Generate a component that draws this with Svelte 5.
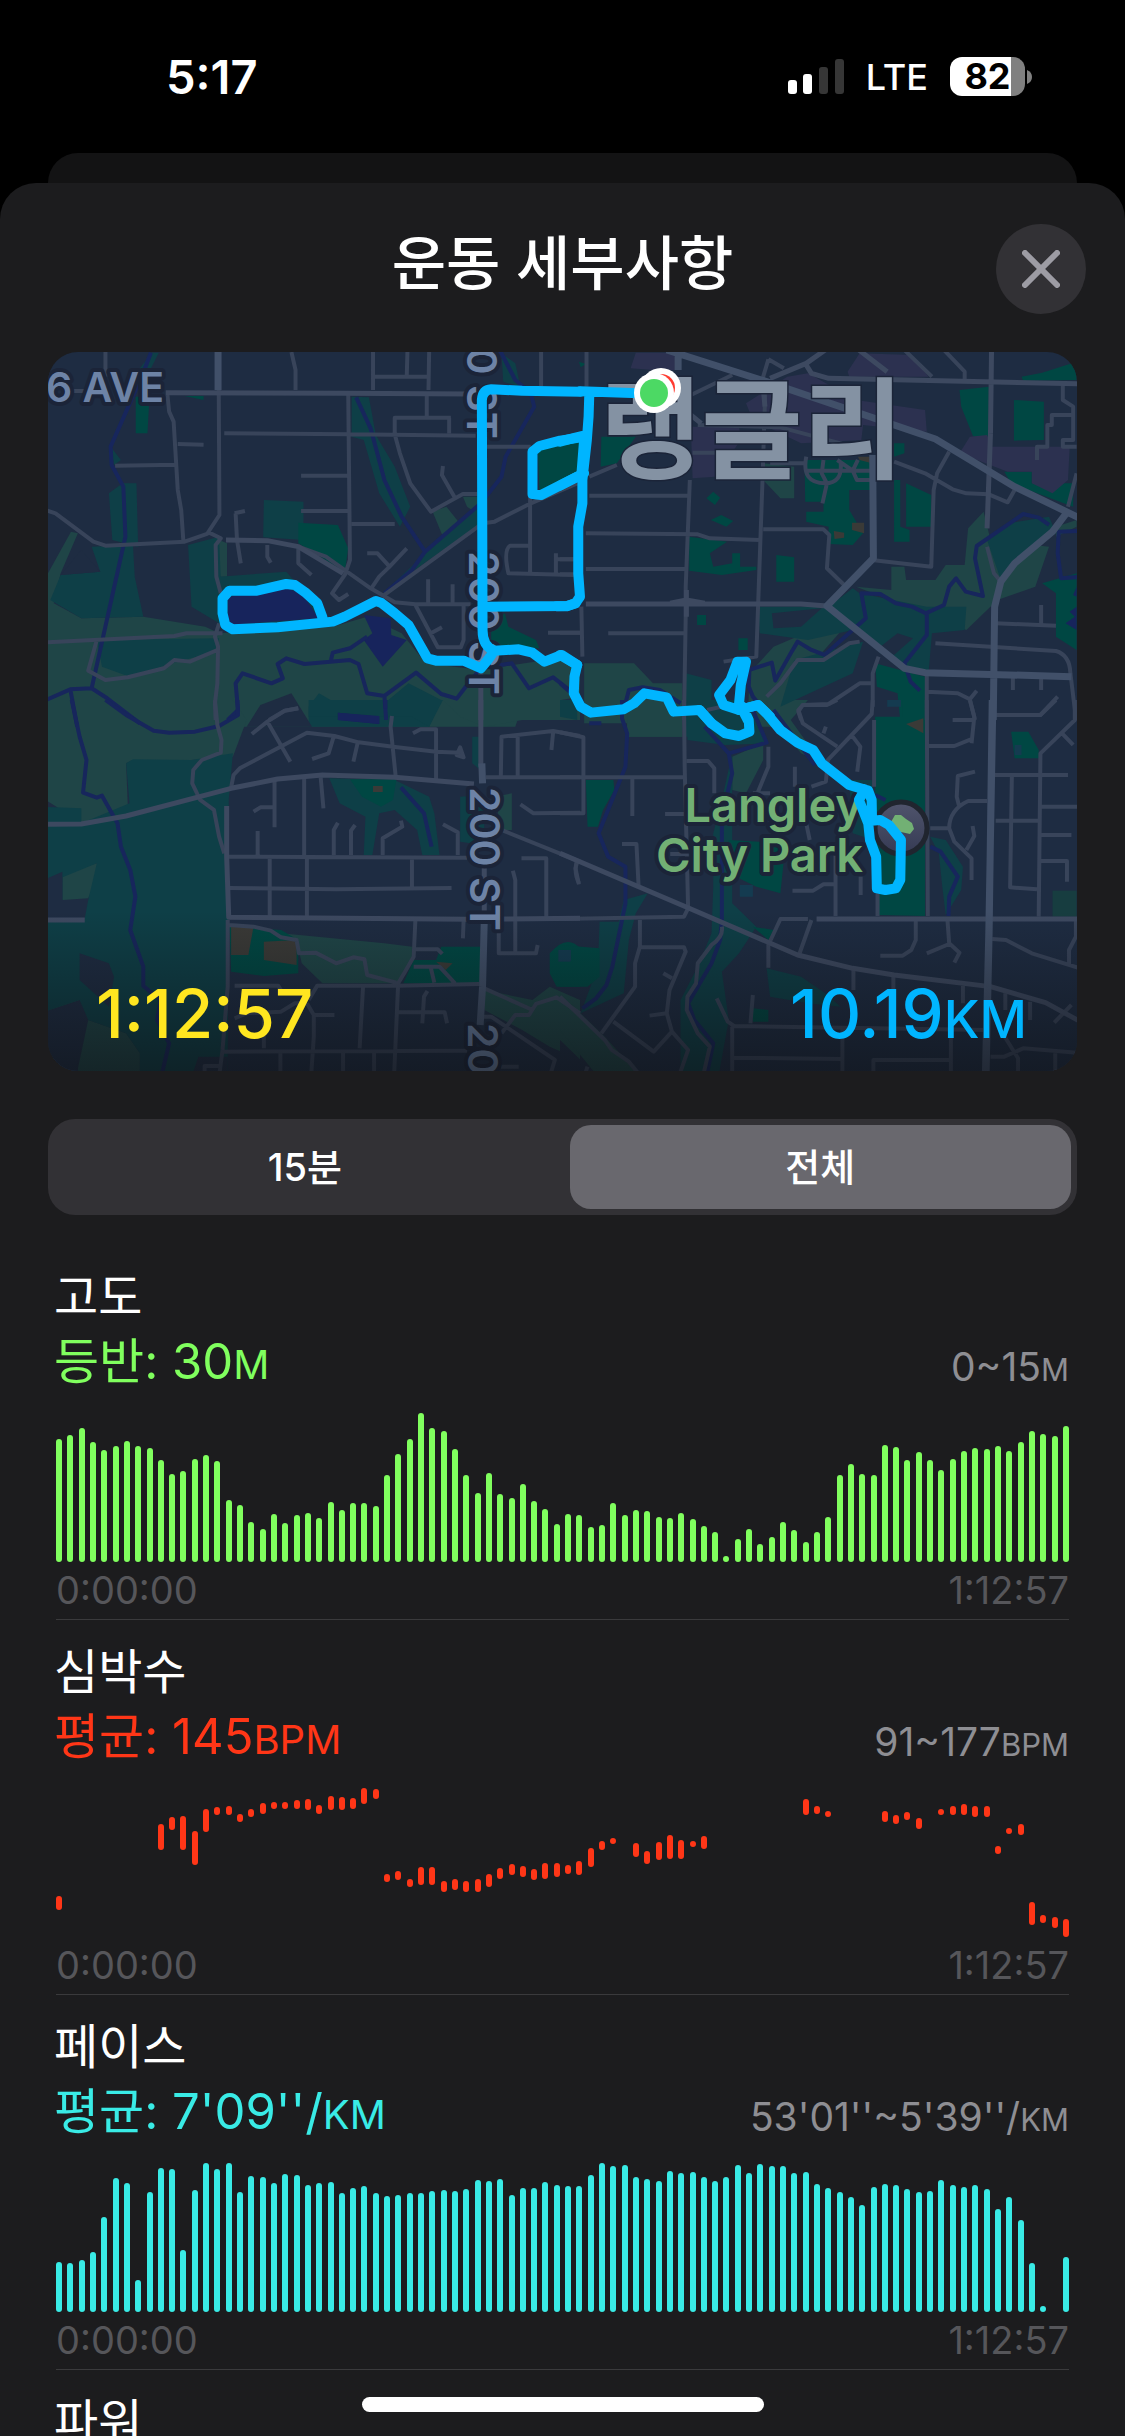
<script>
  let range = "all";

  // heights of the bars, bottom-aligned
  const altitude = [
    123, 127, 134, 120, 112, 116, 121, 116, 114, 102, 88, 91, 103, 107, 101, 62, 57, 40, 33, 48,
    39, 47, 49, 44, 60, 52, 59, 59, 56, 87, 108, 123, 149, 134, 131, 113, 87, 69, 89, 68,
    64, 78, 61, 53, 38, 48, 47, 35, 37, 59, 47, 52, 51, 45, 44, 49, 43, 36, 30, 6,
    23, 33, 18, 25, 40, 32, 20, 30, 45, 87, 98, 88, 87, 117, 115, 102, 110, 102, 92, 103,
    111, 114, 113, 116, 111, 120, 131, 128, 126, 136
  ];
  const pace = [
    50, 49, 52, 60, 95, 134, 129, 32, 120, 144, 143, 62, 122, 149, 143, 149, 120, 136, 135, 129,
    138, 137, 127, 129, 130, 119, 124, 126, 119, 116, 117, 119, 119, 121, 122, 121, 123, 132, 131, 133,
    117, 124, 124, 130, 127, 126, 126, 137, 149, 146, 147, 135, 133, 131, 141, 139, 140, 135, 131, 135,
    147, 139, 148, 146, 146, 139, 140, 128, 124, 120, 115, 107, 125, 128, 127, 123, 120, 121, 132, 127,
    125, 127, 123, 103, 115, 92, 49, 6, 0, 55
  ];
  // [slot, low, height]
  const heart = [
    [0, 27, 14], [9, 87, 26], [10, 107, 13], [11, 87, 34], [12, 72, 34], [13, 105, 23], [14, 122, 8],
    [15, 122, 9], [16, 115, 8], [17, 120, 8], [18, 123, 11], [19, 128, 7], [20, 128, 7], [21, 128, 9],
    [22, 127, 11], [23, 123, 9], [24, 127, 14], [25, 127, 13], [26, 128, 11], [27, 133, 16], [28, 138, 10],
    [29, 55, 8], [30, 57, 9], [31, 50, 8], [32, 52, 18], [33, 52, 18], [34, 45, 11], [35, 47, 11],
    [36, 45, 11], [37, 45, 13], [38, 50, 13], [39, 58, 11], [40, 62, 11], [41, 60, 11], [42, 57, 11],
    [43, 58, 16], [44, 60, 14], [45, 63, 9], [46, 62, 14], [47, 70, 19], [48, 87, 9], [49, 93, 6],
    [51, 80, 14], [52, 73, 13], [53, 77, 18], [54, 78, 24], [55, 78, 19], [56, 90, 6], [57, 88, 13],
    [66, 122, 16], [67, 123, 8], [68, 120, 6], [73, 115, 11], [74, 113, 9], [75, 117, 8], [76, 108, 11],
    [78, 122, 6], [79, 122, 9], [80, 122, 11], [81, 120, 11], [82, 120, 11], [83, 83, 8], [84, 103, 6],
    [85, 102, 11], [86, 12, 23], [87, 14, 8], [88, 9, 11], [89, 0, 18]
  ];

  function fromHeights(list) {
    return list.map((h) => ({ low: 0, h }));
  }
  function fromRanges(list) {
    const bars = Array.from({ length: 90 }, () => ({ low: 0, h: 0 }));
    for (const [slot, low, h] of list) bars[slot] = { low, h };
    return bars;
  }

  const charts = [
    { name: "고도", label: "등반: 30", unit: "M", span: "0~15", color: "green", bars: fromHeights(altitude) },
    { name: "심박수", label: "평균: 145", unit: "BPM", span: "91~177", color: "red", bars: fromRanges(heart) },
    { name: "페이스", label: "평균: 7'09''/", unit: "KM", span: "53'01''~5'39''/", color: "cyan", bars: fromHeights(pace) }
  ];

  // the map is made of four overlapping tiles
  const tiles = [
    {
      x: -8,
      y: -12,
      forest: "M23 700L90 575L110 580L60 700L40 790L120 835L300 830L480 860L520 880L850 860L950 830L1050 880L1120 970L1280 990L1470 960L1568 960V1070L1400 1100L1380 1160H0V700Z M1140 515L1180 500L1215 545L1170 590Z M1228 470H1283V530L1240 500Z M520 600L543 610V710H515Z",
      wood: "M150 620L270 615L275 710L300 830L120 835L30 780L60 705L175 695Z M200 460L240 430L280 430L285 620L210 600Z M430 615L520 590L525 720L520 850L440 800Z M520 710L715 695L850 850L520 860Z M165 900L520 895L510 935L400 965L260 1010L180 980Z M650 480L765 485V600L648 592Z M905 170L955 172L975 285L1030 380L1075 500L1045 560L985 460L940 300L905 290Z M1340 40L1380 70L1395 140L1345 125Z M1000 755L1285 545V480L1120 640Z M780 1100L810 1060L860 1090L1000 1090L1070 1030L1165 1080L1130 1160H780Z M290 85L325 38H345L300 130Z M205 320L235 360L215 375Z",
      park: "M750 548L865 555L895 625L885 695L750 610Z M1445 325L1568 305L1560 400L1450 450Z M1310 850L1350 820L1360 860L1440 900L1450 925L1310 920Z M278 170H318L312 280H278Z M420 168H475V180Z",
      base: "M600 1160L640 1095L730 1060L790 1160Z M60 705L120 630L175 695Z",
      water: "M545 770L715 745L760 760L810 835L545 855Z M940 825L1018 835L1020 885L1065 900L995 980L940 900L965 880Z M865 1118L985 1130V1152L865 1140Z",
      river: "M322 38L295 110L205 320L208 375L242 440L248 590L150 1045L88 1048L0 1088M88 1048L108 1160M150 1045L195 1075L290 1150M545 1140L575 1110L568 1030L588 1000L672 1030L705 1015L690 972L715 955L768 972L900 960L925 972L950 1060L1000 1068L1092 998L1165 1062L1210 1076L1240 1035L1280 985L1370 970L1420 1045L1490 1012L1568 1075M1000 1068L1005 1140M845 960L850 938L900 925L950 890M918 172L960 265L1000 420L1050 530L1118 635L1280 490L1340 410L1352 350L1435 200L1425 160L1380 120L1335 30M1118 635L1080 690L1000 760",
      road: "M95 153H130M190 30V110M519 150L521 525L485 582L420 605L190 617L155 605L45 520L0 505M370 165L375 215L388 245L400 450L410 510L416 600M400 312L475 314M218 377L398 374M730 36L742 90V150M967 30V150M1067 30L1065 105M970 110H1128M1130 30L1128 150M1123 165V230M1030 283V233H1193M1188 233V280M535 280L900 283L1265 287M1290 320H1425M895 165L900 660L885 705L848 760L868 780L895 762M758 407H895M758 513H895M905 552H1030M1030 283L1045 340L1075 430L1135 515L1228 462H1270M1170 378L1167 405L1203 470M485 575L525 595L510 615L512 710L525 760M565 520L595 513M568 520L572 600L583 670M660 615V650L670 668M750 625V670L788 705M950 640H980L1015 680L1065 625M1015 680L985 710L960 748M1000 765L1285 550L1320 545L1425 490L1560 430M1423 470V700M1423 617H1365Q1345 630 1360 700L1550 705M1498 640V700M1498 658H1568M1127 718V790M1198 733V790M1090 795L1155 922H1222L1230 900V795M1135 880L1167 862M0 908L390 888L425 880L530 880M165 900L140 992L190 1020L255 1012L360 985L390 960L435 965L515 930M520 850L508 890L517 920L515 1030L508 1090L510 1140M1475 878H1568M1455 30V140M665 1140L710 1112L750 1105M750 620L830 650L960 745L1030 787L1090 793H1250",
      major: "M365 158L880 160L1250 162M540 600L660 602L750 620L880 700M1280 1000V1140",
      highway: "M517 30V150"
    },
    {
      x: 512,
      y: -12,
      forest: "M590 370L680 380V475H640L590 420Z M1185 565L1230 515L1250 600L1420 620L1380 740L1270 780L1180 870L1050 810L960 780L860 740L962 750V680H1000L1005 720L1090 720L1120 675L1175 675Z M70 970H215L270 1030H355V1190H195V1150H70Z M545 1160L550 1000L620 920L870 810L750 950L640 1160Z M1440 560L1500 540V560L1440 590Z",
      wood: "M1240 600L1300 550L1420 530L1440 580L1380 620L1280 720Z M870 760L1065 800L1180 800L1175 870L1080 880L1070 1000L1000 980L930 940L780 800L850 745Z M680 960L880 905L850 1000L640 1100Z M575 800L770 800L850 870L720 900L580 880Z M365 1000L440 1020V1100L540 1110L520 1190L365 1190Z",
      park: "M1160 150L1245 140V290L1200 290L1165 200Z M1318 180L1405 185V300L1318 302Z M1290 395H1370V430H1490V500L1310 430Z M1340 110L1400 98L1500 65V120L1345 122Z M710 360H905V450H840V510L880 580L850 615L780 612V560L715 545V515H765V485H712Z M1005 430L1078 465V560H1005Z M970 310H1000V340L970 350Z M970 420H988V560L1015 570V605H970Z M628 645L680 652V725H628Z M375 590L485 605L435 640L445 680L500 670V640H523V680H570V690L470 705L375 692Z M425 475L445 455L465 473L450 495Z M438 540L468 525L503 543L483 560Z M398 825H424V855H398Z M518 895H545V930H518Z M120 290H220L165 370L118 380Z M0 300L55 300L50 400L0 425Z M1400 730L1500 700V930L1440 890V760Z M915 970L1060 1010V1160H990L980 1060L920 1040Z M55 65L75 72L60 82Z",
      purple: "M220 38H330L345 90H270L205 85Z M540 190L600 150L660 110L720 100L860 180L1060 210L1065 275L880 255L875 300L700 310L560 240Z M835 95L870 40L1020 45L1070 110H840Z M380 260L520 262L525 300L450 410L385 415Z M1190 290L1240 285L1255 320H1480L1475 420L1430 460L1370 430V395H1300L1160 340Z",
      base: "M615 820L760 805L700 860L620 865Z M930 920L980 880L1025 895L970 945Z",
      brown: "M848 548H883V580L848 570Z M795 573L825 578V593L797 597Z M865 350H900V368L870 360Z",
      water: "M1500 740L1490 765L1500 770Z M1500 800L1480 815L1495 830L1468 850L1500 870Z",
      river: "M1520 572L1448 575L1445 640L1455 715L1520 710M1420 555L1390 533L1345 522L1210 618L1205 655L1228 768L1178 755L1150 715L1130 740L1115 795L1062 820L1022 800L975 790L930 762L875 760L888 835L768 945L730 930L690 905L670 940L625 1022L615 968L550 990L548 1040L560 1070L600 1120M1065 820V885L1000 970L1018 1025L1045 1052M185 1110L200 1050L240 1042L290 1050L350 1090M0 1030L45 1070",
      road: "M77 30V140M85 410L165 375M85 467H375M75 580L400 583L435 595L580 600M75 687H365M0 658H40M0 703H40M62 800L65 950M0 878H62M140 880H360M377 420L365 740V830L360 1140M605 58L590 110V140M605 58L650 85M597 120L588 420L570 950L475 965M590 568H765L782 585L775 685L825 735M385 338H450M400 255L640 262L905 335M380 165L500 105M610 370H710M715 350Q700 430 770 430Q820 430 815 370M765 360L760 400L775 430L762 490M715 392H905M805 360L850 392L862 420H905M865 360L850 392M970 365L1060 400L1140 448L1180 460L1245 463L1300 487L1320 450M1130 335L1095 400L1085 450L1078 680L905 660M1240 620L1260 700L1280 725M1265 850L1440 857M1397 795V850M1090 910L1440 933Q1480 945 1482 1000L1495 1110V1140M1315 1010V1050M1397 1010V1050M1065 1000V1140M1065 1055L1155 1060L1190 1078L1210 1052M1190 1078L1205 1140M1268 1125H1395L1445 1070M925 950L908 1000V1100M905 1030H870L780 1092L705 1095L692 1115L700 1140M870 905L840 910L765 960H690L640 1030L600 1070M1500 400L1475 500M1460 135V180L1490 200V300H1460V320H1500M1485 225H1428V255H1415V320H1385V360M1000 30L1080 110M1115 30L1175 95V120M427 1110L470 1100",
      major: "M610 115L715 70L770 30M715 75L730 100L780 115L1520 132M1250 280L1240 565M1253 30L1250 280M75 792H700L775 798M380 225L410 250M590 140L595 200M868 30L950 95M320 790L367 780L420 790M367 750V830",
      highway: "M310 30L600 125L1090 297L1320 440L1530 545M343 36V90M908 345L910 655L775 798L1000 985L1060 998L1485 1010M1470 520L1430 575L1320 670L1280 725L1262 800L1258 1140"
    },
    {
      x: -8,
      y: 348,
      forest: "M0 0H560L600 60L560 170L440 180H270L250 190L255 320L125 370L0 290Z M65 520L165 490L170 520L140 595L65 600Z M385 650L450 565L545 615V755L480 710Z M0 665H125V760L115 900L0 940Z M140 960L250 1000L290 1060V1130H105Z M700 700L1000 730L1080 740V790L1040 850H820L760 790L745 720Z M1170 0H1568V60H1400L1290 80L1220 50Z M1290 870L1430 900L1480 860L1568 900V1080L1480 1040L1400 990L1290 930Z M1320 290L1370 280V390H1340Z",
      wood: "M250 190L270 178L440 180L560 160L548 300L545 1130H290V1060L250 1000L140 960L115 900L0 940V540L65 520V600H140L165 490L0 560V320L120 325V370L260 310Z M840 235L1030 240L1130 290L1145 340L1160 465H1110L1095 390L1030 330L985 340L965 465H940L945 350L870 310Z M1220 290L1290 285V390L1250 430L1220 425Z M780 0H1170L1130 80L1080 50H860L780 50Z M1255 110H1285V215L1255 190Z",
      park: "M900 238H1035L1025 300L990 320L935 290Z M550 680L700 690L750 720V820L650 828L555 815Z M1165 740H1280V850H1055L1085 780H1150Z M1480 760Q1530 700 1568 745V860H1500L1480 820Z",
      base: "M0 545L65 515V600H140L130 655H0Z M115 760L200 790L215 830L200 920L115 840Z M0 1075L110 1075V1130H0Z M460 1070H545V1130H440Z",
      brown: "M555 680L620 680L605 765H555Z M650 725L745 720V795L650 780Z M967 258H995V276H967Z M1150 785L1198 790L1178 810Z",
      pool: "M1505 750H1540V785H1505Z",
      water: "M865 38L985 48V72L865 60Z",
      river: "M92 0L115 110L135 180L125 278L165 293L180 287L225 370L235 440L262 510L277 590L262 690L300 800V858L350 900L340 960L375 1030L352 1130M190 0L250 45L330 92L375 98L450 95L520 78L575 45L573 0M1003 0V25M1048 262L1115 340L1137 440",
      road: "M508 0L515 75L527 120L525 158L470 180L445 210L442 250L465 300L505 330L520 410L535 460M555 262L562 225L580 205L775 98L855 108L925 127L1025 140L1150 155L1220 158M1210 165L1220 142L1230 172ZM615 102L660 65L712 32L750 25M662 68L727 185M852 112L838 160L790 177M922 130L910 185M1022 48L1018 80L1033 232M1083 100L1105 88H1150V240M1338 232L1340 110L1490 93L1568 108M1387 108V230M1490 95L1485 150M1295 232H1568M681 240V382M620 335L640 322H681M767 230V465M815 232L823 325M632 393V465M865 368L853 390V465M915 375L903 392V465M1048 362L1052 380L995 415V465M1170 373L1213 397V465M545 470L1240 473M667 475V650M775 475V650M1080 475V560M548 564L860 568L1195 564M545 660V860L530 1050L520 1130M1395 313L1433 340L1568 338M1345 392L1568 485M1398 475H1470V650M1373 512L1380 540V755M1332 695V760H1440L1445 735M1090 660L1085 770L1060 815L1040 850L1028 1130M1230 660L1228 715M1090 748H1155L1168 762M1085 800H1160L1205 850M1135 805L1145 848M565 857H692L705 880M780 900L805 857H1040L1275 852M938 860L928 1045M1033 937H1175L1182 970M1125 873L1115 890L1110 970M530 1055L1240 1052M698 1060V1130M775 910L795 945V1010L787 1130M795 945H855M650 940V1045M880 1060V1130M970 1060V1130M478 1130V1098H525M565 955L600 940L700 935L740 910H770M550 675L620 680L670 692L700 712L745 720L752 760L800 758L860 790L910 772L942 778L950 825L1035 848M1290 865L1430 930M1340 1000L1380 945H1420L1440 912L1500 892L1568 940M1285 950H1310L1495 1080L1480 1130M1338 1100H1390M1558 485Q1550 520 1565 550",
      major: "M0 373L120 372L250 348L555 265L690 237L820 225L1030 232L1260 252M0 660H130M542 318V470L548 652L1240 658L1568 655M1280 0V200M1290 500V650",
      highway: "M1283 190L1285 250M1290 660L1285 860L1278 975"
    },
    {
      x: 512,
      y: 348,
      forest: "M195 0H355V110H195Z M500 170L590 130V180L540 280L500 270Z M600 0H720L670 60L760 190L700 160L610 50Z M0 880L130 1010L235 1130H110L0 990Z",
      wood: "M370 0H520L580 60L600 130L480 135L370 120Z M0 0H50V60L0 50Z M445 560V400L470 300L500 160V610L570 680L520 760L470 815L490 960L460 1130H350V900L400 800L440 700Z M185 600L255 580L220 640L200 720L185 880L60 940L110 800L115 665H170Z M600 805L700 830L770 880L815 920L720 910L610 890Z M1075 410L1120 420L1170 500L1165 570L1120 645L1110 560L1100 460Z M840 240L905 240L915 300L910 420L850 400Z",
      park: "M915 50H995V0H1060V648L925 645V560L915 500Z M75 240L155 240L158 270L125 330L110 380L80 380Z M490 420L655 430L640 580L570 560L490 520Z M1310 95H1360L1390 150V175H1320Z M0 735L115 745V830L80 860H0Z M560 925L605 930V965H560Z M560 680L620 690L605 720Z",
      green: "M1430 572H1500V650H1430Z",
      base: "M0 1130V1020L110 1130Z",
      brown: "M1005 72L1055 55V100Z",
      pool: "M522 555H560V590H522Z M1320 135H1340V165H1320Z M0 750H32V782H0Z M950 0H990V20H950Z",
      river: "M180 0V55L195 100L190 200L155 290L112 400L140 470L190 500V610L172 700L152 800L135 855L105 895L65 925M420 80L490 160L600 128L560 30M490 160L500 220L470 350V660L465 720L440 790L372 910L390 960L445 1030L425 1130M915 285L945 300M1075 440L1105 455L1155 530L1130 590L1128 648M620 30L740 195M85 70H120",
      road: "M0 97L68 112V340H0M0 232H360M210 235V348M360 0L362 200L372 625L360 650L0 657M368 183H430L448 205V280M305 342H370M320 462H370M180 432H222L228 555M50 485L45 505L55 553M605 140V200L575 275M560 280H610M682 200V260M715 370L725 420M730 260L772 245L778 180L905 42L908 0M805 0L775 15H705L692 30L705 70L805 140M850 110L872 140L863 215M772 80L765 100M675 572H735L765 553H795M800 460V648M873 530V585M922 580V648M912 60V260M1065 0L1068 648M1068 138H1145L1200 115M1190 0L1203 50L1195 130M1140 60H1200M1205 215L1155 228L1152 290L1158 315M1240 303H1185Q1130 330 1130 385L1145 425L1195 475V540M1075 385H1130M1198 378L1203 408L1180 450M1265 45H1395L1440 0M1495 0V60L1395 160L1390 650M1455 97L1490 135M1262 225H1475M1312 230L1307 562L1385 568M1265 362H1390M1395 320H1520M1395 405H1485M1395 483H1472V545M605 803V735L640 657H720M730 660L695 762M1033 660V720L1020 750L995 767H930M1125 660L1130 730L1160 758L1145 788M1130 732L1065 760M1255 717L1295 720L1370 760L1520 808M1498 660V710L1478 750V795M232 658V740L218 790V860L120 1000M235 742H360L365 755L318 870L310 940L325 995L372 1050L345 1130M155 965L272 1055L325 995M260 947L310 940M300 820L325 835M470 680Q475 710 440 735L400 790L395 850L370 890L368 930L400 1000L435 1040L415 1130M455 895L487 965L505 978L820 983L1240 990M560 885L553 970M500 980V1130M500 1073L815 1077M852 810V870M820 985V1130M968 830V870M1170 858V910M1293 880V930M1135 985V1130M910 1130V1080H1135M1285 1000L1330 1075V1130M1250 1070H1290L1345 1045L1520 1060M1438 1060V1130M1435 968L1485 915M1365 905V960M0 890L130 1020L150 1050L200 1085L235 1130M70 1130L80 1100",
      major: "M0 460L375 625L690 765L850 805L970 825L1250 860L1410 908L1520 970M745 657H1520",
      highway: "M1257 0L1245 700L1235 1130M1255 0L1246 700L1237 1130"
    }
  ];

  const fills = ["forest", "wood", "park", "purple", "green", "base", "brown", "pool", "water"];
  const lines = ["river", "road", "major", "highway"];

  const route = [
    "M820 832L805 790L770 757L740 735L715 732L630 752L550 752L530 775L530 820L538 855L560 868L690 862L850 845L885 830L975 783L990 788L1030 820L1070 855L1125 955L1150 962L1230 962L1280 985L1300 960L1320 932L1390 928L1430 938L1465 965L1515 945L1560 975M1320 932Q1285 920 1285 870L1283 180Q1285 150 1310 148L1400 152L1570 155M1290 800L1530 798L1555 790M1585 290L1510 302L1450 318L1430 335V462L1455 465L1575 402",
    "M58 154L230 160M85 165L83 230L78 300L65 420V490L53 560V700L58 770L45 790L20 799H-10M78 285L45 293L0 305M70 300L62 405M70 400L0 437M0 945L50 975L42 1010L40 1060L60 1100L90 1118L185 1108L215 1090L245 1060L310 1072L330 1115L405 1110L440 1150M545 1140L520 1090L525 1035L540 965L515 965L495 1020L462 1065L475 1095L520 1110L575 1095L610 1130",
    "",
    "M405 30L440 70L480 100L520 108L550 95L548 60L530 20M520 30L575 15L600 40L640 90L690 128L735 150L760 190L840 255L895 272L905 300L906 360M885 268L868 300L895 370L900 420L918 470L920 565L945 570L975 565L988 540L990 420L955 375L930 360L905 362"
  ];
</script>

<div class="screen">
  <div class="status">
    <span class="clock">5:17</span>
    <div class="indicators">
      <svg class="signal" width="56" height="36" viewBox="0 0 56 36" aria-hidden="true">
        <rect x="0" y="21" width="9" height="14" rx="3" fill="#fff" />
        <rect x="15" y="15" width="9" height="20" rx="3" fill="#fff" />
        <rect x="31" y="8" width="9" height="27" rx="3" fill="#363636" />
        <rect x="47" y="0" width="9" height="35" rx="3" fill="#363636" />
      </svg>
      <span class="network">LTE</span>
      <div class="battery">
        <span class="charge">82</span>
        <svg width="5" height="14" viewBox="0 0 5 14" aria-hidden="true"><path d="M0 0Q5 2 5 7T0 14Z" fill="#808080" /></svg>
      </div>
    </div>
  </div>

  <div class="behind"></div>

  <main class="sheet">
    <header>
      <h1>운동 세부사항</h1>
      <button class="close" aria-label="닫기">
        <svg width="38" height="38" viewBox="0 0 38 38" aria-hidden="true">
          <path d="M3 3L35 35M35 3L3 35" stroke="#9d9ca4" stroke-width="6" stroke-linecap="round" />
        </svg>
      </button>
    </header>

    <div class="map">
      <svg viewBox="0 0 1029 719" role="img" aria-label="운동 경로">
        <defs>
          <linearGradient id="poi" x1="0" y1="0" x2="0" y2="1">
            <stop offset="0" stop-color="#50546c" />
            <stop offset="1" stop-color="#363b54" />
          </linearGradient>
        </defs>
        <rect class="base" width="1029" height="719" />
        {#each fills as layer}
          {#each tiles as tile}
            {#if tile[layer]}
              <path class={layer} d={tile[layer]} transform="translate({tile.x} {tile.y}) scale(.3444 .3333)" />
            {/if}
          {/each}
        {/each}
        {#each lines as layer}
          {#each tiles as tile}
            <path class="line {layer}" d={tile[layer]} transform="translate({tile.x} {tile.y}) scale(.3444 .3333)" />
          {/each}
        {/each}

        <text class="street" x="-2" y="50">6 AVE</text>
        <text class="street" transform="translate(419 -57) rotate(90)">200 ST</text>
        <text class="street" transform="translate(421 199) rotate(90)">200 ST</text>
        <text class="street" transform="translate(422 435) rotate(90)">200 ST</text>
        <text class="street" transform="translate(420 671) rotate(90)">200 ST</text>
        <text class="city" x="552" y="118">랭글리</text>

        <circle cx="853" cy="476" r="26" fill="url(#poi)" stroke="#20252f" stroke-width="5" />
        <path d="M843 470L847 463L853 463L858 467L864 471L866 477L862 482L853 480L847 481Z" fill="#72b074" />
        <text class="place" x="815" y="470">Langley</text>
        <text class="place" x="815" y="520">City Park</text>

        {#each route as d, i}
          <path class="line route" {d} transform="translate({tiles[i].x} {tiles[i].y}) scale(.3444 .3333)" />
        {/each}
        <circle cx="613" cy="36" r="20" fill="#fff" />
        <circle cx="613" cy="36" r="14" fill="#ff3b30" />
        <circle cx="606" cy="41" r="20" fill="#fff" />
        <circle cx="606" cy="41" r="14" fill="#4cd964" />
      </svg>
      <div class="totals">
        <span class="time">1:12:57</span>
        <span class="distance">10.19<small>KM</small></span>
      </div>
    </div>

    <div class="segments">
      <button class:on={range == "15"} on:click={() => (range = "15")}>15분</button>
      <button class:on={range == "all"} on:click={() => (range = "all")}>전체</button>
    </div>

    {#each charts as chart}
      <section class={chart.color}>
        <h2>{chart.name}</h2>
        <div class="summary">
          <span class="value">{chart.label}<small>{chart.unit}</small></span>
          <span class="span">{chart.span}<small>{chart.unit}</small></span>
        </div>
        <div class="chart">
          {#each chart.bars as bar}
            <i style="height: {bar.h}px; margin-bottom: {bar.low}px"></i>
          {/each}
        </div>
        <div class="axis"><span>0:00:00</span><span>1:12:57</span></div>
      </section>
    {/each}
    <section>
      <h2>파워</h2>
    </section>
  </main>

  <div class="home"></div>
</div>

<style>
:global(body) {
  background: #000;
}

.screen {
  position: relative;
  display: flex;
  flex-direction: column;
  height: 100vh;
  overflow: hidden;
  background: #000;
  color: #fff;
  font-family: Inter, "Noto Sans CJK KR", sans-serif;
}

.screen button {
  border: 0;
  padding: 0;
  color: inherit;
  font-family: inherit;
  cursor: pointer;
}

/* status bar */
.status {
  display: flex;
  align-items: center;
  justify-content: space-between;
  flex: none;
  height: 153px;
  padding: 0 93px 0 166px;
  box-sizing: border-box;
}

.clock {
  font-size: 47px;
  font-weight: 600;
}

.indicators {
  display: flex;
  align-items: center;
  gap: 22px;
}

.network {
  font-size: 36px;
  font-weight: 500;
}

.battery {
  display: flex;
  align-items: center;
  gap: 2px;
}

.charge {
  width: 75px;
  border-radius: 12px;
  background: linear-gradient(90deg, #fff 82%, #808080 82%);
  color: #000;
  font-size: 36px;
  font-weight: 700;
  line-height: 39px;
  text-align: center;
}

/* sheets */
.behind {
  flex: none;
  height: 66px;
  margin: 0 48px -36px;
  border-radius: 30px 30px 0 0;
  background: #131314;
}

.sheet {
  flex: none;
  border-radius: 36px 36px 0 0;
  background: #1c1c1e;
}

header {
  display: grid;
  grid-template-columns: 90px 1fr 90px;
  padding: 41px 39px 38px;
}

h1 {
  grid-column: 2;
  margin: 0;
  font-size: 59px;
  font-weight: 500;
  line-height: 80px;
  text-align: center;
}

.screen .close {
  display: flex;
  align-items: center;
  justify-content: center;
  height: 90px;
  border-radius: 50%;
  background: #323135;
}

/* map */
.map {
  position: relative;
  margin: 0 48px;
  border-radius: 30px;
  overflow: hidden;
}

.map svg {
  display: block;
  width: 100%;
}

.base { fill: #1e2c42; }
.forest { fill: #1f4547; }
.wood { fill: #0e3f47; }
.park { fill: #004743; }
.purple { fill: #2c3150; }
.green { fill: #173d40; }
.brown { fill: #3a3a37; }
.pool { fill: #143b50; }
.water { fill: #17245c; }

.line {
  fill: none;
  stroke-linejoin: round;
  vector-effect: non-scaling-stroke;
}

.river {
  stroke: #17265c;
  stroke-width: 4px;
}

.road {
  stroke: #38445a;
  stroke-width: 4px;
}

.major {
  stroke: #3d4960;
  stroke-width: 5px;
}

.highway {
  stroke: #415069;
  stroke-width: 7px;
}

.route {
  stroke: #00b5ff;
  stroke-width: 10px;
  stroke-linecap: round;
}

.street,
.place {
  font-weight: 600;
  stroke: #1b2438;
  stroke-width: 8px;
  stroke-linejoin: round;
  paint-order: stroke;
}

.street {
  fill: #6d83a6;
  font-size: 41px;
}

.place {
  fill: #72b074;
  font-size: 47px;
  text-anchor: end;
}

.city {
  fill: #8492a3;
  font-size: 110px;
  font-weight: 700;
  stroke: #1b2438;
  stroke-width: 3px;
  paint-order: stroke;
}

.totals {
  position: absolute;
  left: 0;
  right: 0;
  bottom: 0;
  display: flex;
  align-items: baseline;
  justify-content: space-between;
  height: 160px;
  padding: 65px 50px 0 48px;
  box-sizing: border-box;
  background: linear-gradient(transparent, rgba(14, 16, 20, 0.6));
  font-size: 67px;
  font-weight: 500;
  line-height: 76px;
}

.time {
  color: #ffe620;
}

.distance {
  color: #00b5ff;
}

.distance small {
  font-size: 52px;
}

/* range switch */
.segments {
  display: grid;
  grid-template-columns: 1fr 1fr;
  gap: 14px;
  margin: 48px 48px 30px;
  padding: 6px;
  border-radius: 27px;
  background: #323135;
}

.segments button {
  height: 84px;
  padding-bottom: 5px;
  border-radius: 21px;
  background: none;
  font-size: 38px;
  font-weight: 500;
}

.segments .on {
  background: #69686e;
}

/* charts */
section {
  margin: 0 56px;
  padding: 17px 0 9px;
  border-bottom: 1px solid #3a3a3c;
}

h2 {
  margin: 0 0 0 -2px;
  font-size: 48px;
  font-weight: 400;
  line-height: 69px;
}

.summary {
  display: flex;
  align-items: flex-end;
  justify-content: space-between;
  height: 67px;
  margin-left: -2px;
  line-height: 67px;
}

.value {
  font-size: 49px;
}

.value small {
  font-size: 40px;
}

.span {
  color: #8e8e93;
  font-size: 39px;
  line-height: 56px;
}

.span small {
  font-size: 31px;
}

.chart {
  display: flex;
  align-items: flex-end;
  justify-content: space-between;
  height: 150px;
  margin: 14px 0 8px;
}

.chart i {
  width: 6px;
  border-radius: 3px;
}

.green .value { color: #80ff5e; }
.green i { background: #80ff5e; }
.red .value { color: #ff3617; }
.red i { background: #ff3617; }
.cyan .value { color: #39ebe6; }
.cyan i { background: #39ebe6; }

.axis {
  display: flex;
  justify-content: space-between;
  color: #56565a;
  font-size: 38px;
  line-height: 40px;
}

.home {
  position: absolute;
  left: 50%;
  bottom: 24px;
  width: 402px;
  height: 15px;
  border-radius: 8px;
  background: #fff;
  transform: translateX(-50%);
}
</style>
